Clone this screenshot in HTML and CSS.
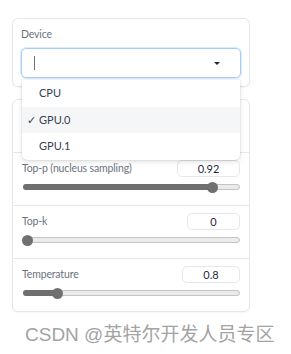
FILE: index.html
```html
<!DOCTYPE html>
<html lang="en">
<head>
    <meta charset="UTF-8">
    <meta name="viewport" content="width=device-width, initial-scale=1.0">
    <title>Model settings</title>
    <link rel="stylesheet" href="styles.css">
</head>
<body>
    <div class="page">
        <div class="card device-card">
            <span class="label">Device</span>
            <div class="select">
                <span class="caret"></span>
                <span class="arrow"></span>
                <ul class="options">
                    <li>CPU</li>
                    <li class="selected"><span class="check">✓</span>GPU.0</li>
                    <li>GPU.1</li>
                </ul>
            </div>
        </div>

        <div class="card params">
            <div class="param">
                <div class="param-head">
                    <span class="hidden-mark"></span>
                    <span class="num num-wide"></span>
                </div>
            </div>
            <div class="param">
                <div class="param-head">
                    <span class="label">Top-p (nucleus sampling)</span>
                    <span class="num num-wide">0.92</span>
                </div>
                <div class="slider"><div class="fill" style="width: 88%"></div></div>
            </div>
            <div class="param">
                <div class="param-head">
                    <span class="label">Top-k</span>
                    <span class="num num-narrow">0</span>
                </div>
                <div class="slider"><div class="fill" style="width: 2%"></div></div>
            </div>
            <div class="param">
                <div class="param-head">
                    <span class="label">Temperature</span>
                    <span class="num num-mid">0.8</span>
                </div>
                <div class="slider"><div class="fill" style="width: 16%"></div></div>
            </div>
        </div>

        <p class="watermark">CSDN @英特尔开发人员专区</p>
    </div>
</body>
</html>
```

FILE: styles.css
```css
body {
    margin: 0;
    background: #ffffff;
    font-family: Lato, 'Noto Sans', sans-serif;
    color: #374151;
}
.page {
    padding: 18px 41px 0 12px;
}
.card {
    border: 1px solid #e5e7eb;
    border-radius: 6px;
    box-shadow: 0 1px 2px rgba(0, 0, 0, 0.04);
    background: #ffffff;
}
.device-card {
    padding: 8px;
    position: relative;
    z-index: 2;
}
.label {
    display: block;
    font-size: 10.5px;
    letter-spacing: -0.15px;
    line-height: 14px;
    color: #6b7280;
}
.device-card .label {
    margin: 0 0 7px;
}
.select {
    position: relative;
    height: 28px;
    border: 1px solid #a5cbff;
    border-radius: 5px;
    box-shadow: 0 0 0 1px #dbeafe;
}
.caret {
    position: absolute;
    left: 12px;
    top: 7px;
    width: 1px;
    height: 14px;
    background: #6b7280;
}
.arrow {
    position: absolute;
    right: 20px;
    top: 13px;
    border-left: 3.5px solid transparent;
    border-right: 3.5px solid transparent;
    border-top: 3.5px solid #1f2937;
}
.options {
    position: absolute;
    left: 0;
    right: 0;
    top: 31px;
    margin: 0;
    padding: 0;
    list-style: none;
    background: #ffffff;
    border-radius: 0 0 6px 6px;
    box-shadow: 0 2px 5px rgba(0, 0, 0, 0.12), 0 0 0 1px rgba(0, 0, 0, 0.03);
}
.options li {
    position: relative;
    height: 26.5px;
    line-height: 25px;
    padding-left: 17px;
    font-size: 11px;
    color: #374151;
}
.options .selected {
    background: #f5f6f8;
}
.check {
    position: absolute;
    left: 5px;
}
.params {
    margin-top: 12px;
}
.param {
    height: 52px;
    padding: 0 9px;
    border-top: 1px solid #e5e7eb;
}
.param:first-child {
    border-top: none;
}
.param-head {
    display: flex;
    justify-content: space-between;
    align-items: flex-start;
    padding-top: 7px;
}
.param-head .label {
    padding-top: 1px;
}
.hidden-mark {
    width: 2px;
    height: 6px;
    margin-top: 5px;
    background: #e8906a;
}
.num {
    height: 15px;
    line-height: 15px;
    border: 1px solid #e5e7eb;
    border-radius: 5px;
    text-align: center;
    font-size: 11px;
    color: #1f2937;
}
.num-wide {
    width: 61px;
}
.num-mid {
    width: 56px;
}
.num-narrow {
    width: 51px;
}
.slider {
    position: relative;
    margin: 7px 0 0 1px;
    height: 4px;
    border: 1px solid #c4c4c4;
    border-radius: 3px;
    background: #ebebeb;
}
.fill {
    position: relative;
    height: 6px;
    margin: -1px 0 0 -1px;
    border-radius: 3px 0 0 3px;
    background: #6f6f6f;
}
.fill::after {
    content: '';
    position: absolute;
    right: -6px;
    top: -2.5px;
    width: 11px;
    height: 11px;
    border-radius: 50%;
    background: #707070;
}
.watermark {
    margin: 11px 0 0 13px;
    font-family: 'Liberation Sans', 'Noto Sans CJK SC', sans-serif;
    font-size: 19px;
    line-height: 24px;
    color: #a3a3a3;
    white-space: nowrap;
}
```
